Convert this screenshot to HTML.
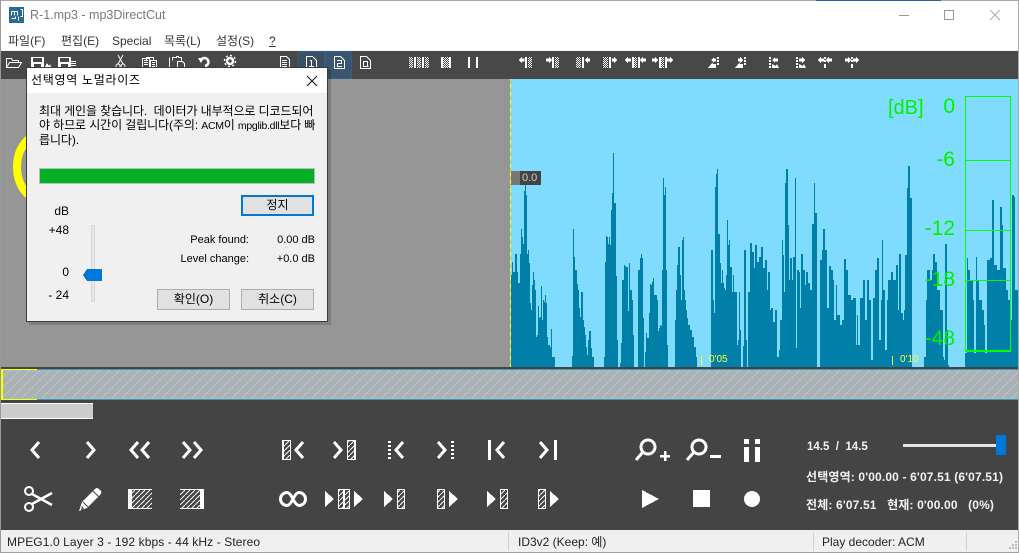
<!DOCTYPE html>
<html><head><meta charset="utf-8"><style>
html,body{margin:0;padding:0;background:#fff}
body{width:1019px;height:553px;overflow:hidden;position:relative;font-family:"Liberation Sans","Noto Sans CJK KR",sans-serif;font-size:12px;color:#000}
.a{position:absolute;white-space:nowrap;line-height:16px}
.r{text-align:right}
.btn{position:absolute;background:#e1e1e1;border:1px solid #adadad;box-sizing:border-box;text-align:center;font-size:12px;line-height:18px}
.w{color:#f2f2f2;font-weight:bold}
.n{font-size:10.5px;letter-spacing:-.3px}
svg{position:absolute;left:0;top:0}
</style></head><body>
<svg width="1019" height="553" viewBox="0 0 1019 553" shape-rendering="crispEdges">
<defs>
<pattern id="ov" width="10" height="10" patternUnits="userSpaceOnUse"><rect width="10" height="10" fill="#b0b0b0"/><path d="M0 10L10 0" stroke="#8cdcfa" stroke-width="1" stroke-dasharray="2 1" shape-rendering="auto"/></pattern>
<pattern id="ht" width="5" height="5" patternUnits="userSpaceOnUse"><path d="M-1 6L6 -1" stroke="#fff" stroke-width="1" shape-rendering="auto"/></pattern>
<pattern id="dt" width="2" height="2" patternUnits="userSpaceOnUse"><rect width="1" height="1" fill="#fff"/><rect x="1" y="1" width="1" height="1" fill="#fff"/></pattern>
</defs>
<rect width="1019" height="553" fill="#fff"/>
<rect x="0" y="0" width="1019" height="1" fill="#a8a8a8"/><rect x="816" y="0" width="125" height="1" fill="#2a6399"/>
<rect x="0" y="50" width="1019" height="1" fill="#f0f0f0"/>
<rect x="1" y="51" width="1018" height="28" fill="#484848"/>
<rect x="1" y="79" width="509" height="288" fill="#969696"/>
<rect x="510" y="79" width="509" height="288" fill="#80dcff"/>
<path fill="#007fa9" d="M510 367V275H512V262H513V272H515V254H517V272H518V283H520V254H521V229H522V237H523V244H524V191H525V185H526V195H527V254H528V250H529V263H530V303H531V310H532V285H533V272H534V280H535V290H536V337H537V335H538V306H539V318H540V317H541V286H542V320H543V300H544V302H545V295H546V303H547V337H548V345H550V347H551V329H552V357H555V367H572V356H573V229H574V257H575V270H577V284H578V290H579V308H580V317H581V292H583V320H584V327H585V335H586V347H587V355H588V340H589V331H591V348H592V357H594V367H604V357H605V262H606V236H607V237H608V244H609V237H610V245H611V210H612V193H613V153H614V203H616V276H617V340H618V367H620V363H621V343H622V280H624V265H625V266H626V267H628V311H629V263H630V290H632V300H633V335H634V367H638V270H640V258H641V254H642V258H643V318H644V367H645V352H646V333H647V338H649V313H650V284H651V285H652V282H653V278H654V295H657V300H658V331H659V328H660V325H661V326H662V270H663V178H664V195H665V187H666V270H667V345H668V367H675V320H676V290H677V265H678V247H680V275H681V300H682V240H683V237H684V290H685V300H686V310H687V318H688V325H690V330H692V337H694V347H696V357H697V367H711V250H713V300H714V313H715V187H716V174H717V169H718V234H720V263H721V283H722V270H723V283H724V288H725V290H726V275H727V220H728V245H729V240H730V267H732V292H733V275H734V292H737V345H738V340H739V292H740V330H741V367H743V346H744V250H746V340H747V367H748V292H750V243H752V252H754V268H755V245H757V262H759V257H761V247H763V268H765V260H767V290H768V272H770V310H771V308H773V322H775V310H777V357H779V350H780V320H782V240H783V255H784V292H785V183H786V169H788V225H789V280H790V258H792V280H793V257H795V178H796V348H797V270H799V272H800V308H801V254H803V270H805V285H806V272H808V283H810V290H812V224H814V183H815V213H817V367H820V260H822V250H823V229H825V250H827V308H829V266H831V270H833V280H834V320H836V285H837V315H840V325H842V320H844V259H846V270H848V295H851V300H853V298H856V345H857V315H858V345H860V298H863V280H865V320H867V280H869V300H871V360H873V298H875V270H877V258H879V340H881V300H882V240H883V290H885V350H887V300H888V280H891V272H893V280H896V265H898V310H899V254H901V313H903V320H904V310H905V255H907V188H908V166H910V198H912V340H912V367H924V357H926V300H927V270H930V280H932V270H933V254H935V262H937V290H940V310H943V357H944V360H945V244H947V330H948V365H949V367H965V353H967V258H968V270H970V280H973V300H974V353H976V257H977V280H979V300H982V310H984V325H985V353H987V260H990V258H992V200H994V265H997V270H1000V207H1002V225H1003V268H1006V290H1008V300H1011V320H1012V195H1014V197H1015V290H1018V367Z"/>
<rect x="510" y="79" width="1" height="288" fill="#ffff00"/>
<path d="M510 80V367" stroke="#969696" stroke-width="1" stroke-dasharray="4 4"/>
<rect x="511" y="171" width="9" height="14" fill="#777"/><rect x="520" y="171" width="21" height="14" fill="#444"/>
<!-- Yellow ring -->
<ellipse cx="40" cy="167" rx="23" ry="32" fill="none" stroke="#ffff00" stroke-width="8" shape-rendering="auto"/>
<!-- Meter -->
<g fill="none" stroke="#00ff00"><rect x="965.5" y="96.5" width="45" height="254"/><path d="M966 160.5H1010M966 230.5H1010M966 280.5H1010"/></g><rect x="965" y="350" width="46" height="2" fill="#00ff00"/>
<rect x="701" y="356" width="1" height="9" fill="#ffff33"/><rect x="892" y="356" width="1" height="9" fill="#ffff33"/>
<!-- bands -->
<rect x="1" y="367" width="1018" height="163" fill="#444"/>
<rect x="1" y="370" width="1018" height="29" fill="url(#ov)" stroke="#6ed6fa"/>
<path d="M37 369.5H2.5V399.5H37" fill="none" stroke="#ffff00"/><rect x="1" y="369" width="2" height="31" fill="#ffff00"/>
<rect x="1" y="403" width="92" height="16" fill="#ccc"/><rect x="1" y="403" width="92" height="1" fill="#fff"/><rect x="1" y="418" width="92" height="1" fill="#fff"/>
<!-- status -->
<rect x="0" y="530" width="1019" height="22" fill="#f0f0f0"/><rect x="0" y="552" width="1019" height="1" fill="#a0a0a0"/>
<rect x="508" y="532" width="1" height="19" fill="#d0d0d0"/><rect x="813" y="532" width="1" height="19" fill="#d0d0d0"/><rect x="966" y="532" width="1" height="19" fill="#d0d0d0"/>
<g fill="#bbb"><rect x="1015" y="541" width="2" height="2"/><rect x="1012" y="544" width="2" height="2"/><rect x="1015" y="544" width="2" height="2"/><rect x="1009" y="547" width="2" height="2"/><rect x="1012" y="547" width="2" height="2"/><rect x="1015" y="547" width="2" height="2"/></g>
<rect x="0" y="0" width="1" height="553" fill="#999"/><rect x="1018" y="0" width="1" height="553" fill="#aaa"/>
<!-- App icon -->
<rect x="9" y="7" width="15" height="16" fill="#2a6a96"/><path d="M11.500 11.500h6M11.500 11.500v4M14.500 11.500v4M17.500 11.500v4M11.500 18.500h4v-2M20.500 9.500h2v7h-2M18.500 20.500v-4" stroke="#fff" fill="none"/>
<!-- window controls -->
<rect x="899" y="15" width="10" height="1" fill="#999"/><rect x="944.5" y="10.5" width="9" height="9" fill="none" stroke="#999"/><path d="M990 10L1000 20M1000 10L990 20" stroke="#aaa" shape-rendering="auto"/>
<!-- toolbar hl -->
<rect x="298.5" y="51.5" width="26" height="27" fill="#3a4f62" stroke="#2f5f8a"/><rect x="325.5" y="51.5" width="26" height="27" fill="#3a556d" stroke="#2f5f8a"/>
<g fill="none" stroke="#fff" stroke-width="1">
<path d="M6.500 67.500V58.500H11.500L12.500 60.500H18.500V62.500" shape-rendering="auto"/><path d="M6.500 67.500L9.500 62.500H21.500L18.500 67.500Z" shape-rendering="auto"/>
<path d="M118 55L123 64M123 55L118 64" shape-rendering="auto"/><circle cx="118" cy="66" r="2" shape-rendering="auto"/><circle cx="123" cy="66" r="2" shape-rendering="auto"/>
<path d="M146.500 60.500V57.500H153.500V60.500M142.500 58.500H149.500V67.500H142.500ZM150.500 60.500H156.500V68.500H150.500ZM144 60.500H148M144 62.500H148M144 64.500H148M152 62.500H155M152 64.500H155M152 66.500H155"/>
<path d="M172.500 60.500V57.500H176.500V56.500H178.500V57.500H181.500V61.500M169.500 57.500V68.500H176.500M177.500 61.500H182.500L184.500 63.500V68.500H177.500Z"/>
<path d="M280.500 56.500H286.500L289.500 59.500V68.500H280.500ZM282 60.500H287M282 62.500H287M282 64.500H287M282 66.500H287"/>
<path d="M306.500 56.500H312.500L316.500 60.500V68.500H306.500Z"/><path d="M334.500 56.500H340.500L344.500 60.500V68.500H334.500Z"/><path d="M360.500 56.500H366.500L370.500 60.500V68.500H360.500Z"/>
<path d="M310 60.500H311.500V66.500M309 66.500H314M337 60.500H341.500V63.500H337.500V66.500H342M363.500 61.500H367.500V66.500H363.500ZM367.500 66.500H368.500"/>
</g>
<g shape-rendering="auto">
<path d="M201 60A4 4 0 1 1 205 66" fill="none" stroke="#fff" stroke-width="2.500"/><path d="M198 58H204L201 63Z" fill="#fff"/>
<circle cx="230" cy="61" r="3" fill="none" stroke="#fff" stroke-width="2.500"/><circle cx="230" cy="61" r="5.500" fill="none" stroke="#fff" stroke-width="1.400" stroke-dasharray="2 2.300"/>
</g>
<path d="M31 57H44V69H31ZM33 58V62H42V58ZM34 64V68H41V64Z" fill="#fff" fill-rule="evenodd"/><path d="M44 69L47 63L49 66L50 64L52 69Z" fill="#fff"/>
<path d="M58 57H71V69H58ZM60 58V62H69V58ZM61 64V68H68V64Z" fill="#fff" fill-rule="evenodd"/><path d="M71 61.500H76M71 63.500H76M71 65.500H76M71 67.500H76" stroke="#fff"/>
<!-- dither -->
<g fill="url(#dt)"><rect x="409" y="57" width="4" height="11"/><rect x="417" y="57" width="4" height="11"/><rect x="425" y="57" width="4" height="11"/><rect x="443" y="57" width="6" height="11"/><rect x="528" y="57" width="4" height="11"/><rect x="555" y="57" width="4" height="11"/><rect x="576" y="57" width="5" height="11"/><rect x="603" y="57" width="5" height="11"/><rect x="634" y="57" width="3" height="11"/><rect x="661" y="57" width="3" height="11"/></g>
<g fill="#fff"><rect x="414" y="57" width="2" height="11"/><rect x="422" y="57" width="2" height="11"/><rect x="441" y="57" width="2" height="11"/><rect x="449" y="57" width="2" height="11"/><rect x="468" y="57" width="2" height="11"/><rect x="476" y="57" width="2" height="11"/><rect x="525" y="57" width="2" height="11"/><rect x="552" y="57" width="2" height="11"/><rect x="582" y="57" width="2" height="11"/><rect x="609" y="57" width="2" height="11"/><rect x="632" y="57" width="2" height="11"/><rect x="638" y="57" width="2" height="11"/><rect x="659" y="57" width="2" height="11"/><rect x="665" y="57" width="2" height="11"/>
<path d="M519 60L522 56.500V58.500H524.500V61.500H522V63.500ZM585 60L588 56.500V58.500H590V61.500H588V63.500ZM625 60L628 56.500V58.500H631V61.500H628V63.500ZM640 60L643 56.500V58.500H646V61.500H643V63.500Z"/>
<path d="M546 58.500H549V56.500L552 60L549 63.500V61.500H546ZM612 58.500H614V56.500L617 60L614 63.500V61.500H612ZM652 58.500H655V56.500L658 60L655 63.500V61.500H652ZM667 58.500H670V56.500L673 60L670 63.500V61.500H667Z"/>
<path d="M708 68L712 63L713 64H716V68ZM735 68L739 63L740 64H743V68ZM711 60L714 57V58.500H716V61.500H714V63ZM738 58.500H740V57L743 60L740 63V61.500H738Z"/>
<path d="M772 68V64L774 65L775 66L777 64L779 68ZM799 68V64L801 65L802 66L804 64L806 68ZM772 60L775 57V58.500H778V61.500H775V63ZM799 58.500H802V57L805 60L802 63V61.500H799Z"/>
<path d="M818 60L821 56.500V58.500H824V61.500H821V63.500ZM826 60L829 56.500V58.500H832V61.500H829V63.500ZM845 58.500H848V56.500L851 60L848 63.500V61.500H845ZM853 58.500H856V56.500L859 60L856 63.500V61.500H853Z"/>
<rect x="717" y="57" width="2" height="2"/><rect x="717" y="60" width="2" height="2"/><rect x="717" y="63" width="2" height="2"/><rect x="744" y="57" width="2" height="2"/><rect x="744" y="60" width="2" height="2"/><rect x="744" y="63" width="2" height="2"/>
<rect x="769" y="57" width="2" height="2"/><rect x="769" y="60" width="2" height="2"/><rect x="769" y="63" width="2" height="2"/><rect x="769" y="66" width="2" height="2"/><rect x="796" y="57" width="2" height="2"/><rect x="796" y="60" width="2" height="2"/><rect x="796" y="63" width="2" height="2"/><rect x="796" y="66" width="2" height="2"/>
<rect x="824" y="57" width="2" height="2"/><rect x="824" y="60" width="2" height="2"/><rect x="824" y="64" width="2" height="2"/><rect x="824" y="66" width="2" height="2"/><rect x="851" y="57" width="2" height="2"/><rect x="851" y="60" width="2" height="2"/><rect x="851" y="64" width="2" height="2"/><rect x="851" y="66" width="2" height="2"/></g>
<!-- Bottom row 1 -->
<g fill="none" stroke="#fff" stroke-width="3" shape-rendering="auto" stroke-linejoin="miter">
<path d="M39 442L32 450L39 458M87 442L94 450L87 458M138 442L131 450L138 458M149 442L142 450L149 458M183 442L190 450L183 458M194 442L201 450L194 458"/>
<path d="M303 442L296 450L303 458M334 442L341 450L334 458M403 442L396 450L403 458M438 442L445 450L438 458M504 442L497 450L504 458M540 442L547 450L540 458"/>
</g>
<rect x="282.500" y="440.500" width="8" height="19" fill="url(#ht)" stroke="#fff"/><rect x="282" y="440" width="2" height="20" fill="#fff"/>
<rect x="347.500" y="440.500" width="8" height="19" fill="url(#ht)" stroke="#fff"/><rect x="354" y="440" width="2" height="20" fill="#fff"/>
<g fill="#fff"><rect x="388" y="441" width="3" height="2"/><rect x="388" y="445" width="3" height="2"/><rect x="388" y="449" width="3" height="2"/><rect x="388" y="453" width="3" height="2"/><rect x="388" y="457" width="3" height="2"/><rect x="451" y="441" width="3" height="2"/><rect x="451" y="445" width="3" height="2"/><rect x="451" y="449" width="3" height="2"/><rect x="451" y="453" width="3" height="2"/><rect x="451" y="457" width="3" height="2"/><rect x="488" y="440" width="3" height="20"/><rect x="554" y="440" width="3" height="20"/></g>
<!-- Bottom row 2 -->
<g shape-rendering="auto">
<g fill="none" stroke="#fff"><circle cx="29" cy="491" r="4" stroke-width="2"/><circle cx="29" cy="507" r="4" stroke-width="2"/><path d="M32 494L52 505M32 504L52 493" stroke-width="2.500"/></g>
<path d="M79 511L82 502L95 489Q97 487 99 489L101 491Q102 493 100 495L87 508ZM81 510L84 509 82 506Z" fill="#fff"/><path d="M93 491L99 497M83 502L88 507" stroke="#444" stroke-width="1"/>
<path d="M293 499C291 495 289 492.500 287 492.500A6.500 6.500 0 0 0 287 505.500C289 505.500 291 503 293 499C295 495 297 492.500 299 492.500A6.500 6.500 0 0 1 299 505.500C297 505.500 295 503 293 499Z" fill="none" stroke="#fff" stroke-width="3"/>
<g fill="none" stroke="#fff" stroke-width="3"><circle cx="648" cy="447" r="7"/><path d="M643 452L636 460"/><circle cx="699" cy="447" r="7"/><path d="M694 452L687 460"/></g>
<path d="M660 456H670M665 451V461" stroke="#fff" stroke-width="2.500" shape-rendering="crispEdges"/><rect x="710" y="455" width="11" height="3" fill="#fff"/>
<circle cx="752" cy="499" r="8" fill="#fff"/>
</g>
<rect x="129" y="489.500" width="23" height="19" fill="url(#ht)"/><path d="M128 489.500H152M128 508.500H152" stroke="#fff"/><rect x="128" y="489" width="4" height="20" fill="#fff"/>
<rect x="180" y="489.500" width="23" height="19" fill="url(#ht)"/><path d="M180 489.500H204M180 508.500H204" stroke="#fff"/><rect x="200" y="489" width="4" height="20" fill="#fff"/>
<g fill="#fff"><path d="M325 491L334 499L325 507ZM354 491L363 499L354 507ZM384 491L393 499L384 507ZM449 491L458 499L449 507ZM487 491L496 499L487 507ZM550 491L559 499L550 507ZM642 490L659 499L642 508Z"/>
<rect x="693" y="490" width="17" height="17"/><rect x="744" y="447" width="5" height="15"/><rect x="755" y="447" width="5" height="15"/><rect x="744" y="439" width="5" height="5"/><rect x="755" y="439" width="5" height="5"/></g>
<g fill="url(#ht)" stroke="#fff"><rect x="338.500" y="489.500" width="5" height="19"/><rect x="344.500" y="489.500" width="5" height="19"/><rect x="397.500" y="489.500" width="7" height="19"/><rect x="437.500" y="489.500" width="7" height="19"/><rect x="500.500" y="489.500" width="7" height="19"/><rect x="538.500" y="489.500" width="7" height="19"/></g>
<!-- slider -->
<rect x="903" y="444" width="103" height="3" fill="#e6e6e6"/><rect x="996" y="435" width="10" height="20" fill="#0078d7"/>
<!-- Dialog -->
<rect x="29" y="70" width="302" height="255" fill="#000" opacity=".15"/>
<rect x="26.500" y="67.500" width="301" height="254" fill="#f0f0f0" stroke="#3c3c3c"/>
<rect x="27" y="68" width="300" height="25" fill="#fff"/>
<path d="M307 76L317 86M317 76L307 86" stroke="#111" shape-rendering="auto"/>
<rect x="39.500" y="168.500" width="275" height="15" fill="#06b025" stroke="#bcbcbc"/>
<rect x="91.500" y="225.500" width="3" height="76" fill="#e7e7e7" stroke="#d6d6d6"/>
<path d="M83 275L87 269H102V281H87Z" fill="#0078d7"/>
</svg>
<div class="a" style="left:30px;top:7px;color:#7a7a7a;font-size:12.5px">R-1.mp3 - mp3DirectCut</div>
<div class="a" style="left:8px;top:33px;color:#333">파일(F)</div>
<div class="a" style="left:61px;top:33px;color:#333">편집(E)</div>
<div class="a" style="left:112px;top:33px;color:#333">Special</div>
<div class="a" style="left:164px;top:33px;color:#333">목록(L)</div>
<div class="a" style="left:216px;top:33px;color:#333">설정(S)</div>
<div class="a" style="left:269px;top:33px;color:#333;text-decoration:underline">?</div>
<div class="a" style="left:522px;top:170px;color:#ccc;font-size:11px">0.0</div>
<div class="a" style="left:709px;top:352px;color:#ffff33;font-size:10px">0'05</div>
<div class="a" style="left:900px;top:352px;color:#ffff33;font-size:10px">0'10</div>
<div class="a" style="left:888px;top:96px;color:#00f000;font-size:20px;line-height:24px">[dB]</div>
<div class="a r" style="left:915px;width:40px;top:95px;color:#00f000;font-size:21px;line-height:24px">0</div>
<div class="a r" style="left:915px;width:40px;top:148px;color:#00f000;font-size:21px;line-height:24px">-6</div>
<div class="a r" style="left:915px;width:40px;top:217px;color:#00f000;font-size:21px;line-height:24px">-12</div>
<div class="a r" style="left:915px;width:40px;top:268px;color:#00f000;font-size:21px;line-height:24px">-18</div>
<div class="a r" style="left:915px;width:40px;top:327px;color:#00f000;font-size:21px;line-height:24px">-48</div>
<div class="a" style="left:31px;top:72px;font-size:12px;letter-spacing:.7px">선택영역 노멀라이즈</div>
<div class="a" style="left:39px;top:104px;font-size:12px;line-height:14px;letter-spacing:-.1px">최대 게인을 찾습니다.&nbsp; 데이터가 내부적으로 디코드되어<br>야 하므로 시간이 걸립니다(주의: <span class="n">ACM</span>이 <span class="n">mpglib.dll</span>보다 빠<br>릅니다).</div>
<div class="a r" style="left:29px;width:40px;top:203px;font-size:12px">dB</div>
<div class="a r" style="left:29px;width:40px;top:222px;font-size:12px">+48</div>
<div class="a r" style="left:29px;width:40px;top:264px;font-size:12px">0</div>
<div class="a r" style="left:29px;width:40px;top:287px;font-size:12px">- 24</div>
<div class="a r" style="left:149px;width:100px;top:232px;font-size:11px">Peak found:</div>
<div class="a r" style="left:149px;width:100px;top:251px;font-size:11px">Level change:</div>
<div class="a r" style="left:255px;width:60px;top:232px;font-size:11px">0.00 dB</div>
<div class="a r" style="left:255px;width:60px;top:251px;font-size:11px">+0.0 dB</div>
<div class="btn" style="left:241px;top:195px;width:73px;height:21px;border:2px solid #0078d7;line-height:16px">정지</div>
<div class="btn" style="left:157px;top:289px;width:73px;height:21px">확인(O)</div>
<div class="btn" style="left:241px;top:289px;width:73px;height:21px">취소(C)</div>
<div class="a w" style="left:807px;top:439px;font-size:11.500px">14.5&nbsp; /&nbsp; 14.5</div>
<div class="a w" style="left:806px;top:469px;font-size:12px;letter-spacing:.15px">선택영역: 0'00.00 - 6'07.51 (6'07.51)</div>
<div class="a w" style="left:806px;top:497px;font-size:12px;letter-spacing:.15px">전체: 6'07.51&nbsp;&nbsp; 현재: 0'00.00&nbsp;&nbsp; (0%)</div>
<div class="a" style="left:7px;top:534px;color:#222;font-size:12px;letter-spacing:.1px">MPEG1.0 Layer 3 - 192 kbps - 44 kHz - Stereo</div>
<div class="a" style="left:518px;top:534px;color:#222;font-size:12px">ID3v2 (Keep: 예)</div>
<div class="a" style="left:822px;top:534px;color:#222;font-size:12px">Play decoder: ACM</div>
</body></html>
